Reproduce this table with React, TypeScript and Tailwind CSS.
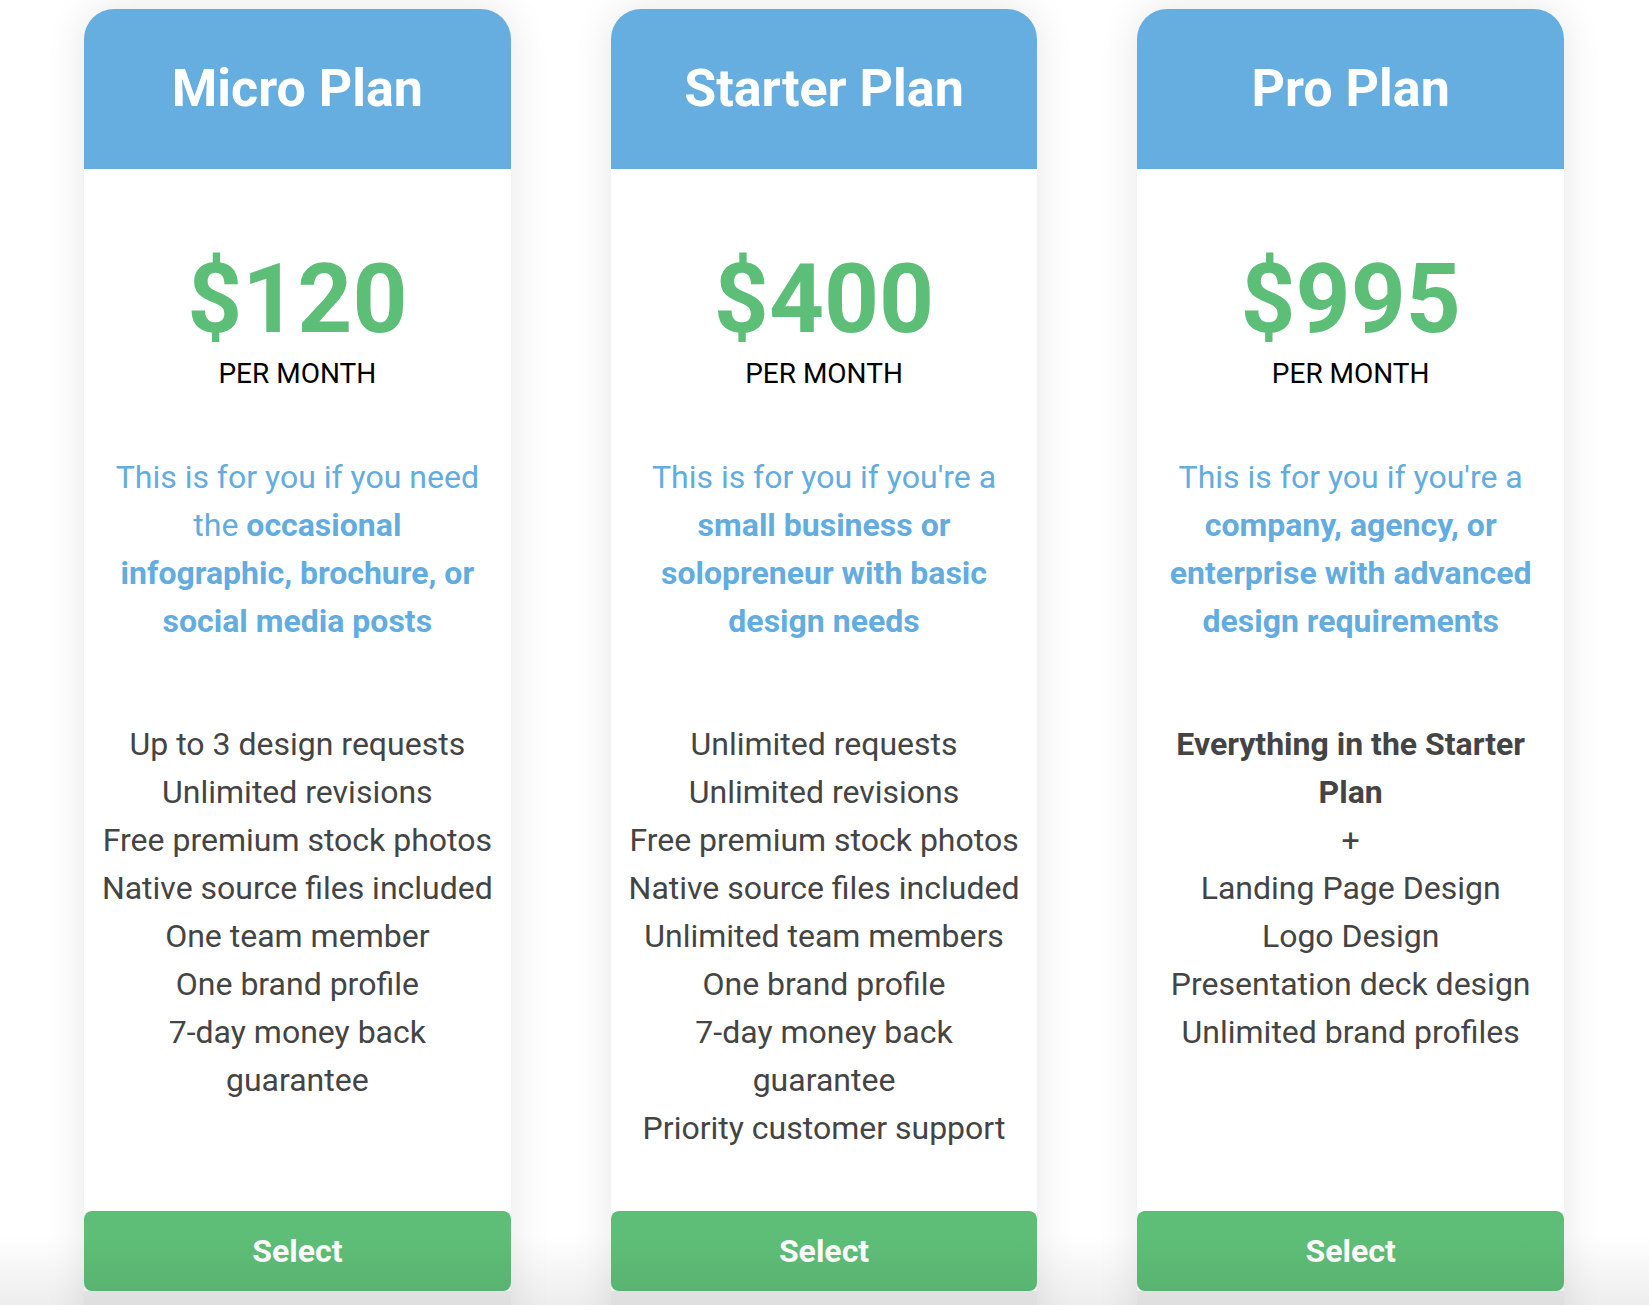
import React from 'react';

interface Plan {
  name: string;
  price: string;
  lead: string;
  strong: string;
  features: React.ReactNode[];
}

const plans: Plan[] = [
  {
    name: 'Micro Plan',
    price: '$120',
    lead: 'This is for you if you need the ',
    strong: 'occasional infographic, brochure, or social media posts',
    features: [
      'Up to 3 design requests',
      'Unlimited revisions',
      'Free premium stock photos',
      'Native source files included',
      'One team member',
      'One brand profile',
      '7-day money back guarantee',
    ],
  },
  {
    name: 'Starter Plan',
    price: '$400',
    lead: "This is for you if you're a ",
    strong: 'small business or solopreneur with basic design needs',
    features: [
      'Unlimited requests',
      'Unlimited revisions',
      'Free premium stock photos',
      'Native source files included',
      'Unlimited team members',
      'One brand profile',
      '7-day money back guarantee',
      'Priority customer support',
    ],
  },
  {
    name: 'Pro Plan',
    price: '$995',
    lead: "This is for you if you're a ",
    strong: 'company, agency, or enterprise with advanced design requirements',
    features: [
      <strong key="all" className="font-bold">Everything in the Starter Plan</strong>,
      '+',
      'Landing Page Design',
      'Logo Design',
      'Presentation deck design',
      'Unlimited brand profiles',
    ],
  },
];

const PlanCard = ({ plan }: { plan: Plan }) => (
  <div className="flex-1 flex flex-col bg-white rounded-t-[30px] shadow-[0_0_40px_rgba(0,0,0,0.1)]">
    <div className="h-[160px] bg-[#67aee0] rounded-t-[30px] flex items-center justify-center">
      <h2 className="text-[52px] font-bold text-white">{plan.name}</h2>
    </div>

    <div className="flex-1 flex flex-col px-4 pt-[82px] pb-[59px] text-center">
      <div className="text-[96px] leading-none font-bold text-[#5dbe78]">{plan.price}</div>
      <div className="mt-[6px] text-[28px] leading-[42px] text-black">PER MONTH</div>

      <p className="mt-[58px] px-3 text-[32px] leading-[48px] text-[#62ace0]">
        {plan.lead}
        <span className="font-bold">{plan.strong}</span>
      </p>

      <ul className="mt-[75px] text-[32px] leading-[48px] text-[#444]">
        {plan.features.map((f, i) => (
          <li key={i}>{f}</li>
        ))}
      </ul>
    </div>

    <button className="h-[80px] rounded-[8px] bg-[#5ebe77] text-white text-[32px] font-bold">Select</button>
    <div className="h-[40px] bg-[#efefef]" />
  </div>
);

export default function App() {
  return (
    <div className="relative h-screen overflow-hidden bg-white font-['Roboto',sans-serif]">
      <div className="flex gap-[100px] pl-[84px] pr-[85px] pt-[9px]">
        {plans.map((p) => (
          <PlanCard key={p.name} plan={p} />
        ))}
      </div>
      <div className="pointer-events-none absolute inset-x-0 bottom-0 h-[70px] bg-gradient-to-b from-transparent to-black/[0.07]" />
    </div>
  );
}
